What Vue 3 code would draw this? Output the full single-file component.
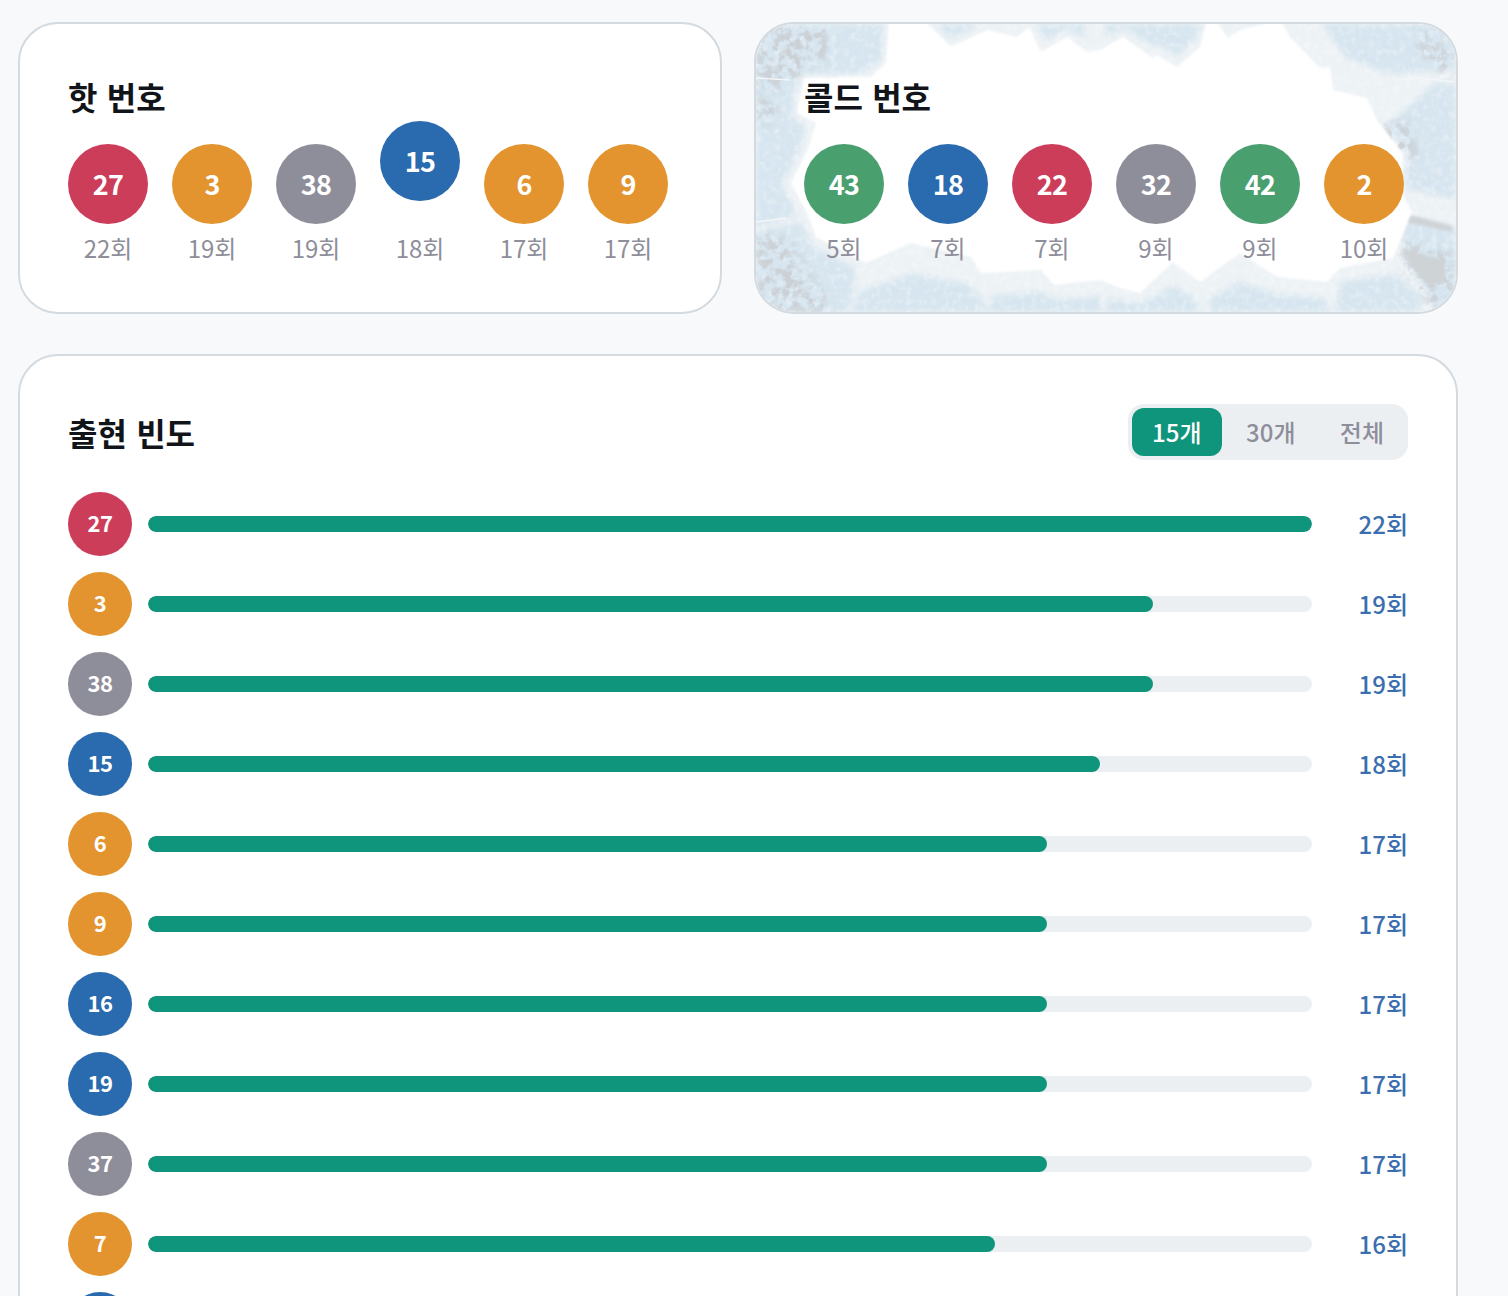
<script setup>
import { ref, computed } from "vue";

// hot / cold number cards
const hotNumbers = [
  { num: 27, count: 22 },
  { num: 3, count: 19 },
  { num: 38, count: 19 },
  { num: 15, count: 18, lifted: true },
  { num: 6, count: 17 },
  { num: 9, count: 17 },
];
const coldNumbers = [
  { num: 43, count: 5 },
  { num: 18, count: 7 },
  { num: 22, count: 7 },
  { num: 32, count: 9 },
  { num: 42, count: 9 },
  { num: 2, count: 10 },
];

// frequency list
const frequency = [
  { num: 27, count: 22 },
  { num: 3, count: 19 },
  { num: 38, count: 19 },
  { num: 15, count: 18 },
  { num: 6, count: 17 },
  { num: 9, count: 17 },
  { num: 16, count: 17 },
  { num: 19, count: 17 },
  { num: 37, count: 17 },
  { num: 7, count: 16 },
  { num: 12, count: 16 },
  { num: 24, count: 16 },
  { num: 33, count: 15 },
  { num: 1, count: 15 },
  { num: 40, count: 15 },
];

const tabs = ["15개", "30개", "전체"];
const activeTab = ref("15개");

const visibleRows = computed(() => {
  if (activeTab.value === "15개") return frequency.slice(0, 15);
  return frequency;
});

const maxCount = computed(() => Math.max(...frequency.map((f) => f.count)));

// lotto ball colour by number range
const ballClass = (n) => {
  if (n <= 10) return "orange";
  if (n <= 20) return "blue";
  if (n <= 30) return "red";
  if (n <= 40) return "gray";
  return "green";
};

// jagged opening in the ice frame
const hole =
  "M133 -4 L168 -4 L195 23 L231 6 L261 13 L273 3 L285 28 L311 13 L331 28 L344 26 L367 13 L397 34 L401 31 L421 43 L444 23 L451 -4 L459 -4 L472 14 L484 6 L524 -4 L534 13 L564 44 L574 43 L577 66 L611 74 L621 96 L647 129 L646 169 L656 188 L637 234 L584 244 L571 258 L521 253 L484 229 L444 258 L417 238 L384 269 L364 264 L344 256 L298 261 L285 246 L225 249 L215 233 L155 219 L110 239 L60 213 L51 189 L35 159 L53 123 L60 99 L41 89 L48 54 L115 53 L130 39 Z";

// blue facets of the ice
const facets = [
  "M0 0 H128 L125 38 L100 50 L44 50 L34 88 L0 70 Z",
  "M0 60 L34 66 L36 92 L50 104 L44 125 L26 160 L42 192 L0 204 Z",
  "M0 208 L46 198 L56 222 L100 244 L94 288 H0 Z",
  "M102 268 L155 250 L212 260 L226 274 L232 288 H96 Z",
  "M236 272 L285 268 L300 276 L345 272 L345 288 H230 Z",
  "M352 274 L384 280 L417 262 L438 274 L446 288 H350 Z",
  "M454 274 L484 258 L520 270 L568 274 L575 288 H452 Z",
  "M584 258 L640 250 L668 274 L662 288 H580 Z",
  "M646 196 L664 194 L700 204 V288 H682 L650 236 Z",
  "M630 102 L652 130 L650 164 L700 176 V62 L680 58 Z",
  "M590 34 L634 50 L700 46 V0 H566 Z",
  "M178 0 H226 L196 14 Z",
  "M280 0 H328 L330 16 L312 4 L290 16 Z",
  "M350 0 H446 L440 14 L421 32 L402 20 L396 22 L368 4 L350 14 Z",
];

// mottled grey areas
const stains = [
  "M0 4 L70 0 L76 30 L44 52 L20 66 L0 60 Z",
  "M0 70 L24 76 L16 100 L0 100 Z",
  "M0 206 L34 216 L62 262 L78 288 H0 Z",
  "M640 216 L696 228 L698 276 L676 284 L652 250 Z",
  "M626 100 L650 96 L664 130 L650 146 L632 130 Z",
  "M660 0 L696 30 L696 56 L664 30 Z",
];

// solid grey smears
const smears = ["M650 190 L696 202 L696 208 L650 198 Z", "M645 224 L688 236 L690 258 L672 262 L658 246 Z"];

// bright cracks between the blocks
const cracks = ["M0 54 L34 56", "M640 56 L664 54 L698 58", "M0 198 L30 194"];
</script>

<template>
  <div class="page">
    <div class="top-row">
      <!-- hot numbers -->
      <section class="card">
        <div class="card-body">
          <h2 class="title">핫 번호</h2>
          <div class="balls">
            <div v-for="item in hotNumbers" :key="item.num" class="ball-item">
              <div class="ball big" :class="[ballClass(item.num), { lifted: item.lifted }]">{{ item.num }}</div>
              <span class="ball-count">{{ item.count }}회</span>
            </div>
          </div>
        </div>
      </section>

      <!-- cold numbers, with ice around the edge -->
      <section class="card">
        <svg class="ice" viewBox="0 0 700 288" preserveAspectRatio="none" aria-hidden="true">
          <defs>
            <filter id="edge" x="-5%" y="-5%" width="110%" height="110%">
              <feGaussianBlur stdDeviation="1.2" />
            </filter>
            <mask id="ice-mask">
              <rect width="700" height="288" fill="#fff" />
              <path :d="hole" fill="#000" filter="url(#edge)" />
            </mask>
            <filter id="soft" x="-15%" y="-15%" width="130%" height="130%">
              <feGaussianBlur stdDeviation="3" />
            </filter>
            <filter id="smear" x="-20%" y="-20%" width="140%" height="140%">
              <feGaussianBlur stdDeviation="1.5" />
            </filter>
            <filter id="mottle" x="-20%" y="-20%" width="140%" height="140%" color-interpolation-filters="sRGB">
              <feGaussianBlur in="SourceGraphic" stdDeviation="5" result="b" />
              <feTurbulence type="fractalNoise" baseFrequency="0.11" numOctaves="4" seed="4" />
              <feColorMatrix type="matrix" values="0 0 0 0 0.8  0 0 0 0 0.82  0 0 0 0 0.84  0 0 0 5 -2.2" result="n" />
              <feComposite in="n" in2="b" operator="in" />
            </filter>
            <filter id="speckle" x="0" y="0" width="100%" height="100%">
              <feTurbulence type="fractalNoise" baseFrequency="0.16" numOctaves="4" seed="9" />
              <feColorMatrix type="matrix" values="0 0 0 0 1  0 0 0 0 1  0 0 0 0 1  0 0 0 3 -1.35" />
            </filter>
          </defs>
          <g mask="url(#ice-mask)">
            <rect width="700" height="288" fill="#edf2f5" />
            <path v-for="(d, i) in facets" :key="'f' + i" :d="d" fill="#d6e5ef" filter="url(#soft)" />
            <rect width="700" height="288" filter="url(#speckle)" opacity="0.3" />
            <path v-for="(d, i) in stains" :key="'s' + i" :d="d" fill="#000" filter="url(#mottle)" />
            <path v-for="(d, i) in smears" :key="'m' + i" :d="d" fill="#ced3d6" filter="url(#smear)" />
            <path v-for="(d, i) in cracks" :key="'c' + i" :d="d" fill="none" stroke="#f4f7f9" stroke-width="1.4" />
          </g>
        </svg>
        <div class="card-body">
          <h2 class="title">콜드 번호</h2>
          <div class="balls">
            <div v-for="item in coldNumbers" :key="item.num" class="ball-item">
              <div class="ball big" :class="ballClass(item.num)">{{ item.num }}</div>
              <span class="ball-count">{{ item.count }}회</span>
            </div>
          </div>
        </div>
      </section>
    </div>

    <!-- frequency chart -->
    <section class="card freq">
      <div class="card-body">
        <div class="freq-header">
          <h2 class="title">출현 빈도</h2>
          <div class="tabs">
            <button
              v-for="tab in tabs"
              :key="tab"
              class="tab"
              :class="{ active: activeTab === tab }"
              @click="activeTab = tab"
            >
              {{ tab }}
            </button>
          </div>
        </div>
        <ul class="rows">
          <li v-for="row in visibleRows" :key="row.num" class="row">
            <div class="ball small" :class="ballClass(row.num)">{{ row.num }}</div>
            <div class="track">
              <div class="fill" :style="{ width: (row.count / maxCount) * 100 + '%' }"></div>
            </div>
            <span class="row-count">{{ row.count }}회</span>
          </li>
        </ul>
      </div>
    </section>
  </div>
</template>

<style>
html,
body {
  margin: 0;
  background: #f8f9fb;
}
</style>

<style scoped>
/* whole page, cut at the window like the screenshot */
.page {
  box-sizing: border-box;
  width: 1508px;
  height: 1296px;
  overflow: hidden;
  padding: 22px 50px 0 18px;
  background: #f8f9fb;
  font-family: "Noto Sans CJK KR", "Noto Sans", sans-serif;
}

.top-row {
  display: grid;
  grid-template-columns: 1fr 1fr;
  gap: 32px;
  margin-bottom: 40px;
}

.card {
  position: relative;
  overflow: hidden;
  background: #fff;
  border: 2px solid #d3dae0;
  border-radius: 40px;
}

.card-body {
  position: relative;
  padding: 48px;
}

.ice {
  position: absolute;
  inset: 0;
  width: 100%;
  height: 100%;
}

.title {
  margin: 0;
  font-size: 32px;
  line-height: 48px;
  font-weight: 700;
  word-spacing: 2px;
  color: #111418;
}

.balls {
  display: flex;
  gap: 24px;
  margin-top: 24px;
}

.ball-item {
  display: flex;
  flex-direction: column;
  align-items: center;
  gap: 8px;
}

.ball {
  box-sizing: border-box;
  display: flex;
  align-items: center;
  justify-content: center;
  flex-shrink: 0;
  border-radius: 50%;
  color: #fff;
  font-weight: 700;
}

.big {
  width: 80px;
  height: 80px;
  padding-bottom: 2px;
  font-size: 27px;
  letter-spacing: -0.7px;
}

.small {
  width: 64px;
  height: 64px;
  padding-bottom: 4px;
  font-size: 22px;
  font-weight: 600;
  letter-spacing: -0.6px;
}

.lifted {
  transform: translateY(-23px);
}

.ball-count {
  font-size: 24px;
  line-height: 32px;
  color: #8e8e9a;
}

.red {
  background: #cc3d5a;
}
.orange {
  background: #e3942e;
}
.gray {
  background: #8e8e9a;
}
.blue {
  background: #2a6aae;
}
.green {
  background: #4a9f6e;
}

.freq-header {
  display: flex;
  align-items: center;
  justify-content: space-between;
  margin-bottom: 32px;
}

.tabs {
  display: flex;
  gap: 4px;
  padding: 4px;
  background: #eceff2;
  border-radius: 16px;
}

.tab {
  min-width: 90px;
  padding: 0 20px 2px;
  height: 48px;
  border: none;
  border-radius: 12px;
  background: transparent;
  font-family: inherit;
  font-size: 24px;
  font-weight: 500;
  color: #8e8e9a;
  cursor: pointer;
}

.tab:last-child {
  min-width: 84px;
}

.tab.active {
  background: #0f957c;
  color: #fff;
}

.rows {
  display: flex;
  flex-direction: column;
  gap: 16px;
  margin: 0;
  padding: 0;
  list-style: none;
}

.row {
  display: flex;
  align-items: center;
  gap: 16px;
}

.track {
  flex: 1;
  height: 16px;
  background: #eceff2;
  border-radius: 8px;
  overflow: hidden;
}

.fill {
  height: 100%;
  background: #0f957c;
  border-radius: 8px;
}

.row-count {
  width: 80px;
  padding-bottom: 2px;
  text-align: right;
  font-size: 24px;
  font-weight: 500;
  color: #3a6eae;
}
</style>
